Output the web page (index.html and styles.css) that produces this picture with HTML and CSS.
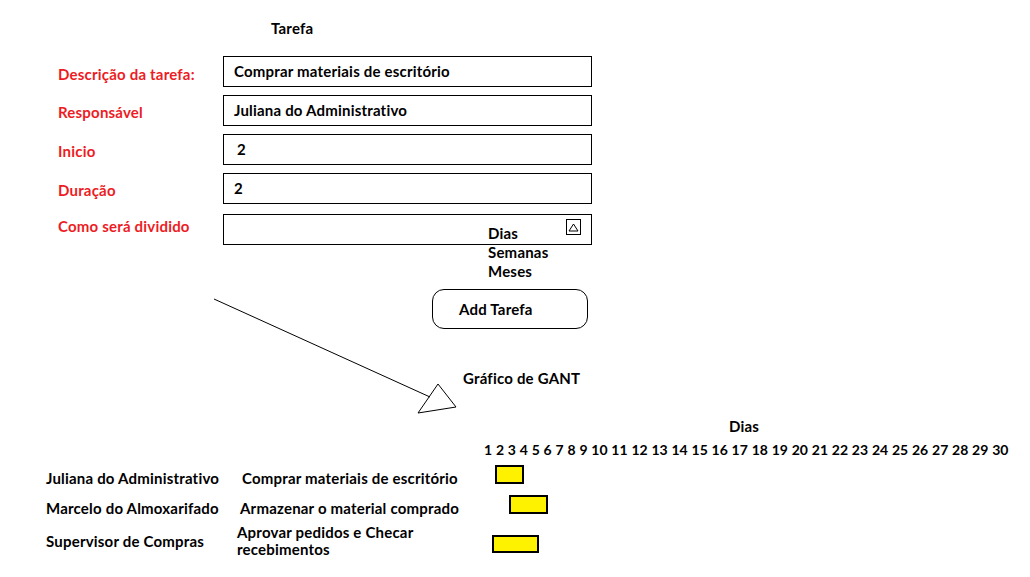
FILE: index.html
```html
<!DOCTYPE html>
<html lang="pt">
<head>
<meta charset="utf-8">
<title>Tarefa</title>
<link rel="stylesheet" href="styles.css">
</head>
<body>
<div class="page">
  <h1 class="title">Tarefa</h1>

  <div class="form">
    <div class="row">
      <span class="label label--first">Descrição da tarefa:</span>
      <div class="field">Comprar materiais de escritório</div>
    </div>
    <div class="row">
      <span class="label">Responsável</span>
      <div class="field">Juliana do Administrativo</div>
    </div>
    <div class="row">
      <span class="label">Inicio</span>
      <div class="field field--num">2</div>
    </div>
    <div class="row">
      <span class="label">Duração</span>
      <div class="field">2</div>
    </div>
    <div class="row row--select">
      <span class="label label--top">Como será dividido</span>
      <div class="field field--select">
        <span class="select-btn">
          <svg width="11" height="9" viewBox="0 0 11 9"><path d="M5.5 1 L10 8 L1 8 Z" fill="none" stroke="#000" stroke-width="1"/></svg>
        </span>
        <ul class="options">
          <li>Dias</li>
          <li>Semanas</li>
          <li>Meses</li>
        </ul>
      </div>
    </div>
  </div>

  <button class="add-btn" type="button">Add Tarefa</button>

  <h2 class="chart-title">Gráfico de GANT</h2>

  <div class="gantt">
    <div class="gantt-head">
      <div class="axis-label">Dias</div>
      <div class="days">1 2 3 4 5 6 7 8 9 10 11 12 13 14 15 16 17 18 19 20 21 22 23 24 25 26 27 28 29 30</div>
    </div>
    <div class="gantt-rows">
      <div class="g-name">Juliana do Administrativo</div>
      <div class="g-task g-task--a">Comprar materiais de escritório</div>
      <div class="g-track"><span class="bar bar--raised" style="margin-left:11px;width:29px"></span></div>

      <div class="g-name">Marcelo do Almoxarifado</div>
      <div class="g-task">Armazenar o material comprado</div>
      <div class="g-track"><span class="bar bar--raised" style="margin-left:25px;width:39px"></span></div>

      <div class="g-name">Supervisor de Compras</div>
      <div class="g-task g-task--wrap">Aprovar pedidos e Checar<br>recebimentos</div>
      <div class="g-track"><span class="bar bar--low" style="margin-left:8px;width:47px"></span></div>
    </div>
  </div>

  <svg class="arrow" width="1030" height="577" viewBox="0 0 1030 577">
    <line x1="214" y1="299" x2="430" y2="397" stroke="#000" stroke-width="1"/>
    <path d="M438 384 L456 407 L418 413 Z" fill="none" stroke="#000" stroke-width="1"/>
  </svg>
</div>
</body>
</html>
```

FILE: styles.css
```css
* { box-sizing: border-box; }

html, body {
  margin: 0;
  padding: 0;
  background: #fff;
}

body {
  font-family: Lato, "Open Sans", "Liberation Sans", sans-serif;
  font-weight: 700;
  font-size: 15px;
  line-height: 17px;
  letter-spacing: 0.2px;
  color: #000;
}

.page {
  position: relative;
  width: 1030px;
  height: 577px;
  padding-top: 20px;
  overflow: hidden;
}

.title {
  margin: 0 0 0 271px;
  font-size: 15px;
  line-height: 17px;
  font-weight: 700;
}

.form {
  margin: 19px 0 0 58px;
  display: flex;
  flex-direction: column;
  gap: 8px;
}

.row {
  display: grid;
  grid-template-columns: 165px 369px;
  height: 31px;
}

.row--select {
  margin-top: 2px;
}

.label {
  color: #ed1c24;
  padding-top: 9px;
}

.label--first {
  padding-top: 10px;
}

.label--top {
  padding-top: 4px;
}

.field {
  position: relative;
  border: 1px solid #000;
  height: 31px;
  padding: 6px 0 0 10px;
}

.field--num {
  padding-left: 13px;
}

.select-btn {
  position: absolute;
  right: 10px;
  top: 4px;
  width: 15px;
  height: 16px;
  border: 1px solid #000;
  display: flex;
  align-items: center;
  justify-content: center;
}

.select-btn svg { display: block; }

.options {
  position: absolute;
  left: 264px;
  top: 9px;
  margin: 0;
  padding: 0;
  list-style: none;
}

.options li {
  line-height: 19px;
}

.add-btn {
  display: block;
  margin: 44px 0 0 432px;
  width: 156px;
  height: 40px;
  border: 1px solid #000;
  border-radius: 12px;
  background: #fff;
  font: inherit;
  letter-spacing: inherit;
  color: #000;
  text-align: left;
  padding: 0 0 0 26px;
}

.chart-title {
  margin: 41px 0 0 463px;
  font-size: 15px;
  line-height: 17px;
  font-weight: 700;
}

.gantt-head {
  padding-left: 484px;
}

.axis-label {
  margin: 31px 0 0 245px;
}

.days {
  margin-top: 6px;
  white-space: nowrap;
  font-size: 14px;
  letter-spacing: 0;
  word-spacing: 0.4px;
}

.gantt-rows {
  margin: 5px 0 0 46px;
  display: grid;
  grid-template-columns: 194px 244px 1fr;
  grid-auto-rows: minmax(30px, auto);
  align-items: center;
}

.g-task--a {
  margin-left: 2px;
}

.g-task--wrap {
  line-height: 17px;
  padding: 1px 0;
  margin-left: -3px;
}

.g-track {
  display: flex;
  align-items: center;
}

.bar {
  display: block;
  height: 19px;
  background: #fff200;
  border: 2px solid #000;
}

.bar--raised {
  margin-bottom: 8px;
}

.bar--low {
  height: 18px;
  margin-top: 6px;
}

.arrow {
  position: absolute;
  left: 0;
  top: 0;
  pointer-events: none;
}
```
